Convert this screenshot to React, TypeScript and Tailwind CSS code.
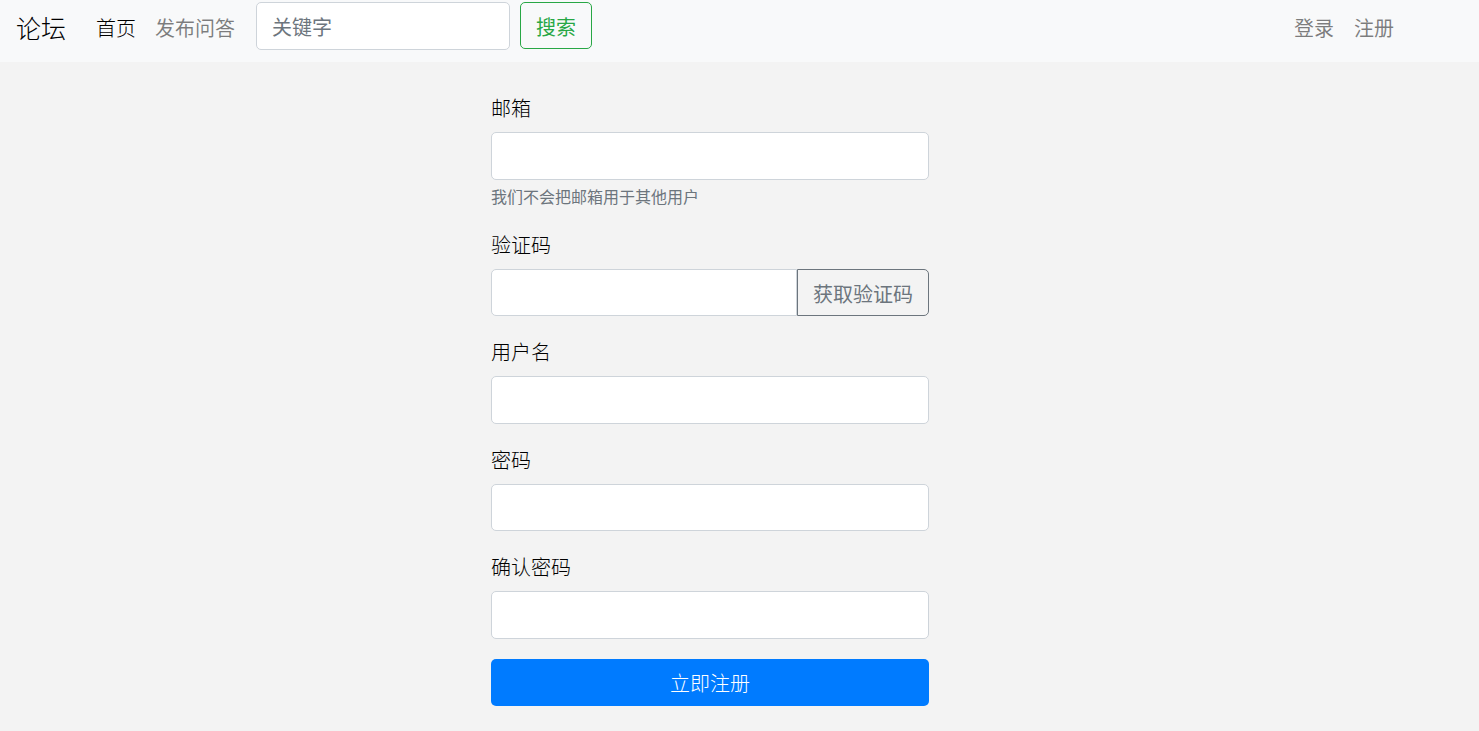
const font = { fontFamily: '"Liberation Sans", "Noto Sans CJK SC", sans-serif' };

function Field({ label, help }: { label: string; help?: string }) {
  return (
    <div className="mb-[20px]">
      <label className="block h-[30px] mb-[10px] leading-[34px] text-black">{label}</label>
      <input className="block w-full h-[47.5px] px-[15px] bg-white border border-[#ced4da] rounded-[5px]" />
      {help && <small className="block mt-[5px] h-[24px] font-normal text-[#6c757d] text-[16px] leading-[25px]">{help}</small>}
    </div>
  );
}

export default function App() {
  return (
    <div className="min-h-[731px] bg-[#f3f3f3] text-[20px] font-light text-[#212529]" style={font}>
      <nav className="flex items-start h-[62px] bg-[#f8f9fa] pl-4 pt-[2px] leading-[54px]">
        <a className="text-[25px] text-black mr-[30px]">论坛</a>
        <a className="text-black mr-[19px]">首页</a>
        <a className="font-normal text-[#00000080] mr-[21px]">发布问答</a>
        <input placeholder="关键字" className="w-[254px] h-[48px] px-[15px] pt-[4px] bg-white border border-[#ced4da] rounded-[5px] mr-[10px] font-normal placeholder:text-[#6c757d]" />
        <button className="h-[47px] w-[72px] border border-[#28a745] font-normal text-[#28a745] rounded-[5px] leading-[50px]">搜索</button>
        <div className="ml-auto flex gap-[20px] pr-[85px] font-normal text-[#00000080]">
          <a>登录</a>
          <a>注册</a>
        </div>
      </nav>
      <form className="w-[438px] ml-[491px] pt-[30px]">
        <Field label="邮箱" help="我们不会把邮箱用于其他用户" />
        <div className="mb-[20px]">
          <label className="block h-[30px] mb-[10px] leading-[34px] text-black">验证码</label>
          <div className="flex">
            <input className="flex-1 min-w-0 h-[47.5px] px-[15px] bg-white border border-[#ced4da] rounded-l-[5px]" />
            <button type="button" className="w-[132px] h-[47.5px] border border-[#6c757d] font-normal text-[#6c757d] rounded-r-[5px] leading-[50px]">获取验证码</button>
          </div>
        </div>
        <Field label="用户名" />
        <Field label="密码" />
        <Field label="确认密码" />
        <button type="button" className="w-full h-[47.5px] bg-[#007bff] text-white rounded-[5px] leading-[50px]">立即注册</button>
      </form>
    </div>
  );
}
